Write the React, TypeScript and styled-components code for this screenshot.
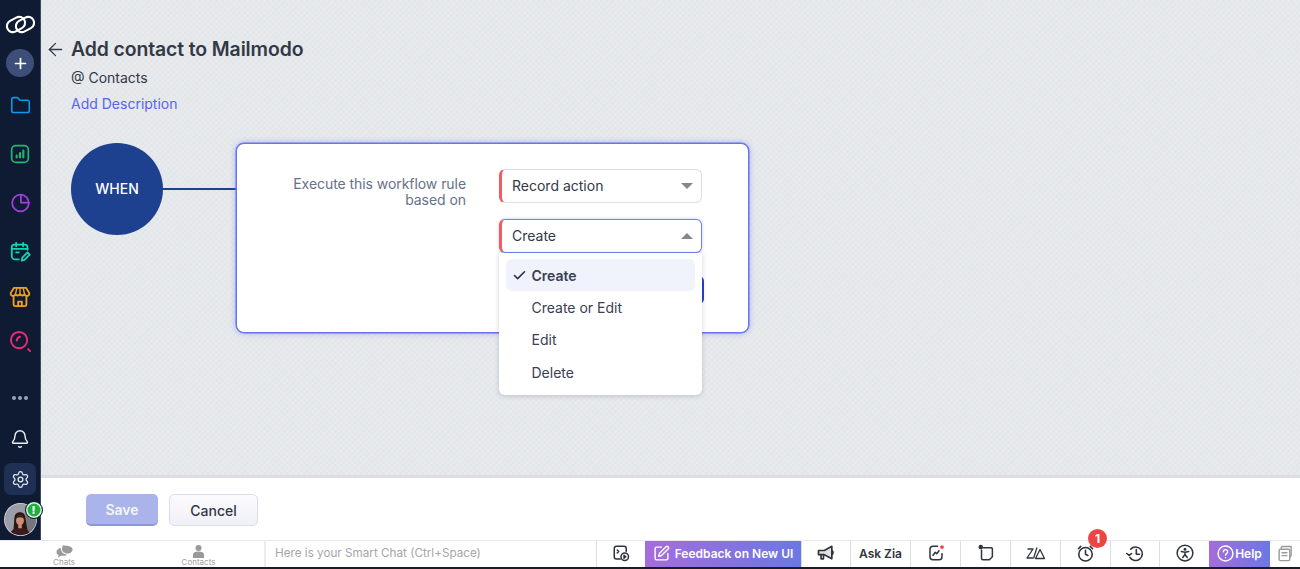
import React from "react";
import styled, { createGlobalStyle } from "styled-components";
import { ArrowLeft, Bell, Check, Folder, Plus, Settings, SquarePen } from "lucide-react";

const Global = createGlobalStyle`
  html, body { margin: 0; padding: 0; width: 100%; height: 100%; overflow: hidden; }
  body { font-family: Inter, "Noto Sans", "Liberation Sans", sans-serif; color: #2e3445; }
  #root { height: 569px; }
  * { box-sizing: border-box; }
`;

const Page = styled.div`
  width: 1300px;
  height: 569px;
  display: flex;
  flex-direction: column;
  background: #1a1d26;
`;
const Top = styled.div`
  display: flex;
  height: 540px;
  flex: none;
`;
const Sidebar = styled.nav`
  width: 41px;
  flex: none;
  background: #0f1b33;
  border-right: 1px solid #3c4963;
  display: flex;
  flex-direction: column;
  align-items: center;
`;
const NavSlot = styled.div<{ $h: number; $pt?: number }>`
  height: ${(p) => p.$h}px;
  width: 100%;
  flex: none;
  padding-top: ${(p) => p.$pt ?? 0}px;
  display: flex;
  align-items: center;
  justify-content: center;
`;
const PlusCircle = styled.div`
  width: 28px;
  height: 28px;
  border-radius: 50%;
  background: #3d4e78;
  color: #fff;
  display: flex;
  align-items: center;
  justify-content: center;
`;
const Dots = styled.div`
  display: flex;
  gap: 2px;
  span {
    width: 4px;
    height: 4px;
    border-radius: 50%;
    background: #98a3bf;
  }
`;
const GearBox = styled.div`
  width: 32px;
  height: 32px;
  border-radius: 7px;
  background: #1f3055;
  color: #e8ebf2;
  display: flex;
  align-items: center;
  justify-content: center;
`;
const AvatarWrap = styled.div`
  position: relative;
  width: 33px;
  height: 33px;
`;
const AvatarBadge = styled.div`
  position: absolute;
  top: -2px;
  right: -6px;
  width: 18px;
  height: 18px;
  border-radius: 50%;
  background: #1fae3f;
  border: 1px solid #0f1b33;
  box-shadow: inset 0 0 0 1.5px #e9f5ec;
  color: #fff;
  font-size: 11px;
  font-weight: 800;
  line-height: 16px;
  text-align: center;
`;
const Main = styled.main`
  flex: 1;
  display: flex;
  flex-direction: column;
  min-width: 0;
`;
const Canvas = styled.section`
  height: 478px;
  flex: none;
  padding: 36px 0 0 30px;
  border-bottom: 3px solid #dcdde8;
  background-color: #e6e9ec;
  background-image:
    repeating-linear-gradient(45deg, rgba(255,255,255,.09) 0 2px, transparent 2px 4px),
    repeating-linear-gradient(-45deg, rgba(120,130,140,.03) 0 2px, transparent 2px 4px);
`;
const TitleRow = styled.div`
  position: relative;
  height: 26px;
  display: flex;
  align-items: center;
`;
const BackIcon = styled.span`
  position: absolute;
  left: -26px;
  top: 3px;
  color: #363b48;
  display: flex;
`;
const Title = styled.h1`
  margin: 0;
  font-size: 19.4px;
  font-weight: 600;
  letter-spacing: -0.1px;
  color: #333846;
`;
const Module = styled.div`
  margin-top: 6px;
  font-size: 14px;
  line-height: 20px;
  color: #333846;
`;
const AddDescription = styled.a`
  display: block;
  margin-top: 6px;
  font-size: 14px;
  line-height: 20px;
  color: #5a63ee;
`;
const Flow = styled.div`
  margin-top: 29px;
  display: flex;
  align-items: flex-start;
`;
const Circle = styled.div`
  width: 92px;
  height: 92px;
  flex: none;
  border-radius: 50%;
  background: #1d408f;
  color: #fff;
  font-size: 14px;
  font-weight: 500;
  padding-bottom: 2px;
  display: flex;
  align-items: center;
  justify-content: center;
`;
const Connector = styled.div`
  width: 73px;
  height: 2px;
  margin-top: 45px;
  background: #1d408f;
  flex: none;
`;
const Card = styled.div`
  width: 513px;
  height: 190px;
  flex: none;
  border: 1px solid #6674f2;
  border-radius: 8px;
  background: #fff;
  box-shadow: 0 0 0 0.5px #6674f2, 0 0 6px rgba(102, 116, 242, 0.55);
  padding: 25px 0 0 0;
  display: flex;
  align-items: flex-start;
`;
const RuleLabel = styled.div`
  width: 229px;
  margin-top: 7px;
  padding-left: 40px;
  text-align: right;
  font-size: 14px;
  letter-spacing: -0.06px;
  line-height: 16px;
  color: #66718a;
`;
const Fields = styled.div`
  margin-left: 33px;
  width: 203px;
  display: flex;
  flex-direction: column;
`;
const SelectBox = styled.div<{ $open?: boolean }>`
  position: relative;
  height: 34px;
  border: 1px solid ${(p) => (p.$open ? "#7581f0" : "#dcdde6")};
  border-left: 3px solid #f25c5c;
  border-radius: 6px;
  background: #fff;
  padding: 0 8px 2px 10px;
  font-size: 14px;
  display: flex;
  align-items: center;
  justify-content: space-between;
  color: #333846;
  box-shadow: ${(p) => (p.$open ? "0 0 3px rgba(117,129,240,.5)" : "none")};
`;
const Caret = styled.span<{ $up?: boolean }>`
  width: 0;
  height: 0;
  margin-top: 2px;
  border-left: 6px solid transparent;
  border-right: 6px solid transparent;
  ${(p) => (p.$up ? "border-bottom: 6px solid #84878f;" : "border-top: 6px solid #84878f;")}
`;
const SelectGroup = styled.div`
  position: relative;
  margin-top: 16px;
`;
const Menu = styled.ul`
  position: absolute;
  z-index: 2;
  top: 34px;
  left: 0;
  width: 203px;
  height: 142px;
  margin: 0;
  padding: 6px 7px;
  list-style: none;
  background: #fff;
  border-radius: 0 0 6px 6px;
  box-shadow: 0 1px 5px rgba(40, 45, 70, 0.22);
`;
const MenuItem = styled.li<{ $active?: boolean }>`
  position: relative;
  height: 32.4px;
  padding-left: 25.5px;
  border-radius: 6px;
  font-size: 14px;
  font-weight: ${(p) => (p.$active ? 600 : 400)};
  background: ${(p) => (p.$active ? "#f0f3fb" : "transparent")};
  color: #3a4054;
  display: flex;
  align-items: center;
`;
const MenuCheck = styled.span`
  position: absolute;
  left: 6px;
  top: 9px;
  display: flex;
  color: #2e3445;
`;
const NextButton = styled.div`
  align-self: flex-end;
  width: 100px;
  height: 28px;
  margin: 23px -2px 0 0;
  border-radius: 5px;
  background: #2b3fc4;
`;
const Footer = styled.footer`
  flex: 1;
  background: #fff;
  display: flex;
  align-items: flex-start;
  gap: 11px;
  padding: 16px 0 0 45px;
`;
const SaveButton = styled.button`
  width: 72px;
  height: 32px;
  border: 0;
  border-bottom: 2px solid #8c97dc;
  border-radius: 5px;
  background: #aab3ea;
  color: #f4f5fd;
  font: 600 14px Inter, sans-serif;
`;
const CancelButton = styled.button`
  width: 89px;
  height: 32px;
  border: 1px solid #dcdeee;
  border-radius: 5px;
  background: linear-gradient(#fbfbfe, #f0f0f8);
  color: #333846;
  font: 500 14px Inter, sans-serif;
`;
const ChatBar = styled.div`
  height: 27px;
  flex: none;
  display: flex;
  background: #fff;
  border-top: 1px solid #e8e8ee;
`;
const ChatTab = styled.div<{ $w: number; $pl?: number }>`
  width: ${(p) => p.$w}px;
  flex: none;
  padding-left: ${(p) => p.$pl ?? 0}px;
  display: flex;
  flex-direction: column;
  align-items: center;
  justify-content: flex-end;
  font-size: 8px;
  line-height: 9px;
  color: #a0a0a0;
`;
const SmartChat = styled.div`
  width: 332px;
  flex: none;
  padding-left: 9px;
  border-left: 2px solid #ececf1;
  font-size: 11.7px;
  line-height: 25px;
  color: #a6a6a6;
`;
const Tool = styled.div<{ $w: number; $plain?: boolean }>`
  position: relative;
  width: ${(p) => p.$w}px;
  flex: none;
  padding-bottom: 2px;
  display: flex;
  align-items: center;
  justify-content: center;
  gap: 5px;
  border-left: ${(p) => (p.$plain ? "0" : "1px solid #dcdce6")};
  color: #30343f;
  font-size: 12px;
  font-weight: 600;
`;
const GradientTool = styled(Tool)<{ $tight?: boolean }>`
  background: linear-gradient(90deg, #a66cdc, #6a78e4);
  border-left: 0;
  color: #fff;
  gap: ${(p) => (p.$tight ? 1 : 5)}px;
`;
const Badge = styled.span`
  position: absolute;
  top: -12px;
  left: 27px;
  width: 19px;
  height: 19px;
  border-radius: 50%;
  background: #ee4444;
  color: #fff;
  font-size: 12px;
  font-weight: 700;
  text-align: center;
  line-height: 19px;
`;

type P = { c?: string; s?: number };
const Ico: React.FC<React.PropsWithChildren<P>> = ({ c = "currentColor", s = 20, children }) => (
  <svg width={s} height={s} viewBox="0 0 24 24" fill="none" stroke={c} strokeWidth="2" strokeLinecap="round" strokeLinejoin="round">
    {children}
  </svg>
);

const Logo = () => (
  <svg width="31" height="21" viewBox="0 0 31 21" fill="none" stroke="#fff" strokeWidth="2.1">
    <rect x="1.500" y="4.500" width="19" height="12" rx="6" transform="rotate(-28 11 10.500)" />
    <rect x="10.500" y="4.500" width="19" height="12" rx="6" transform="rotate(-28 20 10.500)" />
  </svg>
);

const Avatar = () => (
  <svg width="33" height="33" viewBox="0 0 32 32">
    <defs>
      <clipPath id="av"><circle cx="16" cy="16" r="15.200" /></clipPath>
    </defs>
    <circle cx="16" cy="16" r="16" fill="#d8d9de" />
    <g clipPath="url(#av)">
      <rect width="32" height="32" fill="#9b9da8" />
      <rect x="21" width="11" height="32" fill="#73757f" />
      <path d="M9 28 L10 16 C10 11 12 9 15.500 9 C19 9 21 11 21 16 L23 28 Z" fill="#2c1712" />
      <ellipse cx="15.500" cy="17" rx="3.800" ry="4.800" fill="#c98f78" />
      <path d="M11.500 15 C13 11 18 11 19.500 15 C17 13.500 14 13.500 11.500 15 Z" fill="#2c1712" />
      <path d="M5 32 C6 26 11 24 15.500 24 C20 24 25 26 26 32 Z" fill="#3a1a1c" />
      <rect x="13.800" y="21" width="3.500" height="3.500" fill="#c98f78" />
    </g>
  </svg>
);

const Bubble = () => (
  <svg width="17" height="13" viewBox="0 0 17 13" fill="#9a9a9a">
    <path d="M6.500 0.500 C11 0.500 16.500 1 16.500 4.500 C16.500 7 14 8.500 11.500 8.500 C9 8.500 6 7 6 4 Z" />
    <path d="M5 3 C2 3.500 0.500 5 0.500 7 C0.500 8.500 1.500 9.500 2.500 10 L2 12.500 L5 10.800 C7 11 10 10.800 11 9.400 C8 9.400 4.800 7.500 5 3 Z" />
  </svg>
);

const Person = () => (
  <svg width="13" height="13" viewBox="0 0 13 13" fill="#9a9a9a">
    <circle cx="6.500" cy="3" r="3" />
    <path d="M1 13 V9.500 C1 7.500 3 6.500 6.500 6.500 C10 6.500 12 7.500 12 9.500 V13 Z" />
  </svg>
);

export default function App() {
  return (
    <Page>
      <Global />
      <Top>
        <Sidebar>
          <NavSlot $h={48}><Logo /></NavSlot>
          <NavSlot $h={30}><PlusCircle><Plus size={17} strokeWidth={2.4} /></PlusCircle></NavSlot>
          <NavSlot $h={51} $pt={3}><Folder size={21} color="#0a9af0" strokeWidth={1.8} /></NavSlot>
          <NavSlot $h={49}>
            <Ico c="#1fb873" s={20}>
              <rect x="2" y="2" width="20" height="20" rx="5" />
              <path d="M8 16v-2M12 16v-5M16 16V8" strokeWidth="2.600" />
            </Ico>
          </NavSlot>
          <NavSlot $h={49}>
            <Ico c="#a23fe0" s={21}>
              <circle cx="12" cy="12.500" r="9.500" />
              <path d="M12.500 3v9h9" />
            </Ico>
          </NavSlot>
          <NavSlot $h={49}>
            <Ico c="#17d6ad" s={21}>
              <path d="M10 21H6a4 4 0 0 1-4-4V7a3 3 0 0 1 3-3h12a3 3 0 0 1 3 3v3" />
              <path d="M7 2v4M15 2v4M2 9h18M7 13h3" />
              <path d="M13.500 22.500l.5-3.500 6-6 2.500 2.500-6 6z" />
            </Ico>
          </NavSlot>
          <NavSlot $h={39} $pt={2}>
            <Ico c="#f5a01f" s={22}>
              <path d="M5.500 2h13l3.500 5.500a2.600 2.600 0 0 1-5 1.500a3 3 0 0 1-5 0a3 3 0 0 1-5 0a2.600 2.600 0 0 1-5-1.500z" />
              <path d="M8.500 2.500L7 9M12 2.500V9M15.500 2.500L17 9" strokeWidth="1.500" />
              <path d="M5 12v8a2 2 0 0 0 2 2h10a2 2 0 0 0 2-2v-8" />
              <path d="M10 22v-5h4v5" />
            </Ico>
          </NavSlot>
          <NavSlot $h={53}>
            <Ico c="#ec2a78" s={23}>
              <circle cx="10.500" cy="10.500" r="8.500" />
              <path d="M8 11c.3-1.800 1.500-3.200 3.500-4M20 20l2 2" />
            </Ico>
          </NavSlot>
          <NavSlot $h={51} $pt={9}><Dots><span /><span /><span /></Dots></NavSlot>
          <NavSlot $h={40}><Bell size={20} color="#eef0f5" strokeWidth={1.7} /></NavSlot>
          <NavSlot $h={40}><GearBox><Settings size={19} strokeWidth={1.6} /></GearBox></NavSlot>
          <NavSlot $h={40}>
            <AvatarWrap>
              <Avatar />
              <AvatarBadge>!</AvatarBadge>
            </AvatarWrap>
          </NavSlot>
        </Sidebar>
        <Main>
          <Canvas>
            <TitleRow>
              <BackIcon><ArrowLeft size={21} strokeWidth={1.5} /></BackIcon>
              <Title>Add contact to Mailmodo</Title>
            </TitleRow>
            <Module>@ Contacts</Module>
            <AddDescription>Add Description</AddDescription>
            <Flow>
              <Circle>WHEN</Circle>
              <Connector />
              <Card>
                <RuleLabel>Execute this workflow rule based on</RuleLabel>
                <Fields>
                  <SelectBox>Record action<Caret /></SelectBox>
                  <SelectGroup>
                    <SelectBox $open>Create<Caret $up /></SelectBox>
                    <Menu>
                      <MenuItem $active>
                        <MenuCheck><Check size={15} strokeWidth={2.6} /></MenuCheck>
                        Create
                      </MenuItem>
                      <MenuItem>Create or Edit</MenuItem>
                      <MenuItem>Edit</MenuItem>
                      <MenuItem>Delete</MenuItem>
                    </Menu>
                  </SelectGroup>
                  <NextButton />
                </Fields>
              </Card>
            </Flow>
          </Canvas>
          <Footer>
            <SaveButton>Save</SaveButton>
            <CancelButton>Cancel</CancelButton>
          </Footer>
        </Main>
      </Top>
      <ChatBar>
        <ChatTab $w={128}><Bubble />Chats</ChatTab>
        <ChatTab $w={136} $pl={5}><Person />Contacts</ChatTab>
        <SmartChat>Here is your Smart Chat (Ctrl+Space)</SmartChat>
        <Tool $w={49}>
          <Ico s={18} c="#30343f">
            <path d="M11 20H6a3 3 0 0 1-3-3V6a3 3 0 0 1 3-3h10a3 3 0 0 1 3 3v4" />
            <path d="M7 8l2 2-2 2" />
            <circle cx="17" cy="17" r="5" />
            <path d="M16 15l2.500 2-2.500 2z" fill="#30343f" />
          </Ico>
        </Tool>
        <GradientTool $w={156}>
          <SquarePen size={17} strokeWidth={2} />
          Feedback on New UI
        </GradientTool>
        <Tool $w={49}>
          <Ico s={20} c="#30343f">
            <path d="M3 9h7l9-5v15l-9-5H3z" fill="#30343f" fillOpacity=".15" />
            <path d="M6 14v5h3v-5M19 9c2 1 2 4 0 5" />
          </Ico>
        </Tool>
        <Tool $w={60}>Ask Zia</Tool>
        <Tool $w={50}>
          <Ico s={18} c="#30343f">
            <path d="M20 13v4a4 4 0 0 1-4 4H8a4 4 0 0 1-4-4V7a4 4 0 0 1 4-4h6" />
            <path d="M8 15l3-4 2 2 3-4" />
            <circle cx="20" cy="4" r="1.500" fill="#ee4444" stroke="#ee4444" />
          </Ico>
        </Tool>
        <Tool $w={50}>
          <Ico s={18} c="#30343f">
            <path d="M8 5h11a1.500 1.500 0 0 1 1.500 1.500V17l-4 4H8a2 2 0 0 1-2-2V8" />
            <circle cx="5" cy="4" r="2" fill="#30343f" />
          </Ico>
        </Tool>
        <Tool $w={50}>
          <svg width="20" height="14" viewBox="0 0 20 14" fill="none" stroke="#30343f" strokeWidth="1.300" strokeLinejoin="round">
            <path d="M1.500 3h5.500L1 12h6" />
            <path d="M11 1.500L7.500 12.500" />
            <path d="M14 3.500L9.500 12.500h9z" />
          </svg>
        </Tool>
        <Tool $w={50}>
          <Badge>1</Badge>
          <Ico s={19} c="#30343f">
            <circle cx="12" cy="13" r="8.500" />
            <path d="M12 8v5l3 1.500M3 6l3-3M21 6l-3-3" />
          </Ico>
        </Tool>
        <Tool $w={49}>
          <Ico s={19} c="#30343f">
            <path d="M6 6.500A8.500 8.500 0 1 1 5 17" />
            <path d="M13 7v6h4M1 12l3 2.500L7 12" />
          </Ico>
        </Tool>
        <Tool $w={50}>
          <Ico s={18} c="#30343f">
            <circle cx="12" cy="12" r="10.500" />
            <circle cx="12" cy="7" r="1" fill="#30343f" />
            <path d="M7 10l5 1 5-1M12 11v3l-3 4M12 14l3 4" />
          </Ico>
        </Tool>
        <GradientTool $w={61} $tight>
          <Ico s={17} c="#fff">
            <circle cx="12" cy="12" r="10.500" />
            <path d="M9 9.500a3 3 0 1 1 4.500 2.600c-1 .6-1.500 1.200-1.500 2.400M12 18h.01" />
          </Ico>
          Help
        </GradientTool>
        <Tool $w={30} $plain>
          <Ico s={17} c="#9a9a9a">
            <path d="M6 5V4a2 2 0 0 1 2-2h12v13l-2 2" />
            <rect x="3" y="6" width="15" height="16" rx="2" />
            <path d="M7 11h7M7 15h7" />
          </Ico>
        </Tool>
      </ChatBar>
    </Page>
  );
}
